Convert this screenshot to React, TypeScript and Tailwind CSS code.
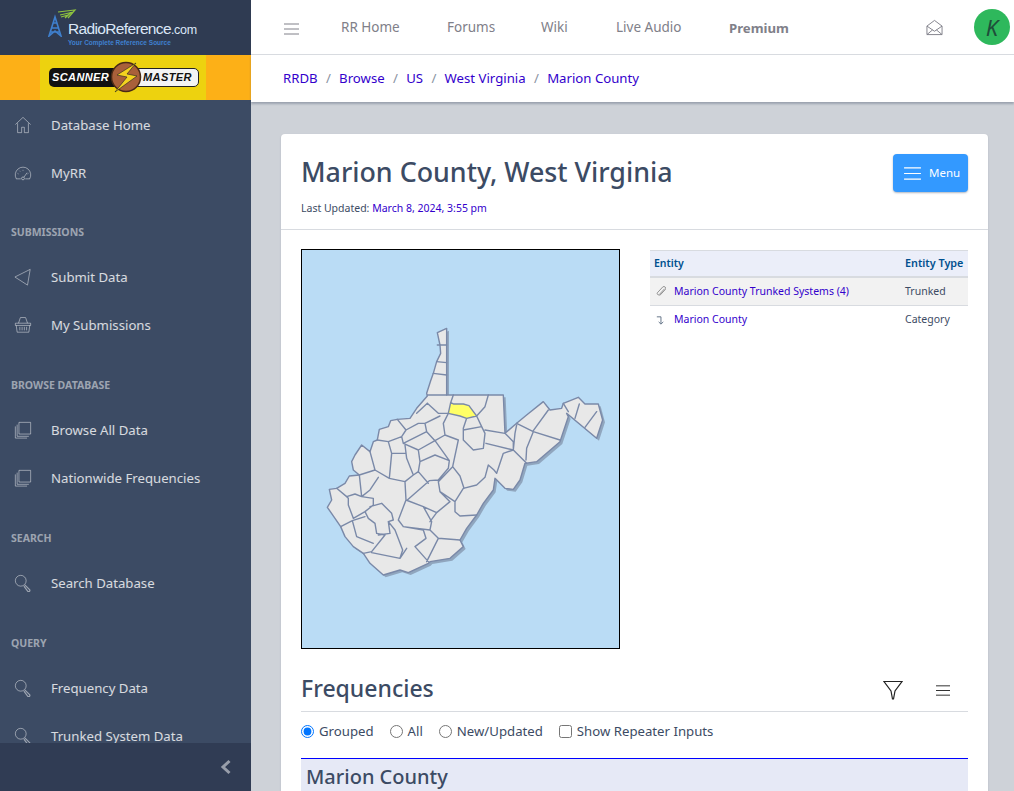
import React from "react";

const font = { fontFamily: '"Noto Sans", "Open Sans", sans-serif' };

const I = ({ children, className = "" }: { children: React.ReactNode; className?: string }) => (
  <svg viewBox="0 0 20 20" fill="none" stroke="currentColor" strokeWidth="1" className={className}>{children}</svg>
);
const Home = () => <I className="w-[18px] h-[18px]"><path d="M1.500 9.500 10 1.500l8.500 8M4 8v10.500h4.500v-6h3v6H16V8" /></I>;
const Gauge = () => <I className="w-[18px] h-[18px]"><path d="M2.500 16.500h5M12.500 16.500h5M2.600 16.500a8.600 8.600 0 1 1 14.800 0" /><circle cx="10" cy="16" r="1.600" /><path d="m11 14.700 3.500-5M4 10.500l1 .5M16 10.500l-1 .5M10 6.500v1M6 7.500l.8.8" /></I>;
const Send = () => <I className="w-[18px] h-[18px]"><path d="M1 10 18 1.500 15 19Z" /></I>;
const Basket = () => <I className="w-[18px] h-[18px]"><path d="M1.500 8h17v2.500h-17zM2.500 10.500 3.500 18h13l1-7.500M5 8l2-6M15 8l-2-6M7 1.700h6M6.500 12v4M9 12v4M11.500 12v4M14 12v4" /></I>;
const Layers = () => <I className="w-[18px] h-[18px]"><path d="M5.500 1.500h13v13h-13zM3.500 4v13h13M1.500 6v13h13" /></I>;
const Search = () => <I className="w-[18px] h-[18px]"><circle cx="7.500" cy="7.500" r="6" /><path d="m12 12 5.500 5.500a1.500 1.500 0 0 1-2 2L11 13.500" strokeWidth="1.300" /></I>;

const Item = ({ icon, label }: { icon: React.ReactNode; label: string }) => (
  <div className="h-[48px] flex items-center pl-[14px] shrink-0">
    <span className="w-[37px] text-white/50 flex shrink-0">{icon}</span>
    <span className="text-white/80 text-[13.200px] leading-[21px] whitespace-nowrap">{label}</span>
  </div>
);
const Title = ({ children, first = false }: { children: React.ReactNode; first?: boolean }) => (
  <div className={`${first ? "mt-[15px]" : "mt-4"} py-3 px-[11px] text-[10.500px] leading-[17px] font-bold uppercase text-white/50 shrink-0`}>{children}</div>
);

const Logo = () => (
  <div className="h-[55px] bg-[#2f3b52] shrink-0 flex items-start pl-[48px] pt-[9px]">
    <svg width="30" height="28" viewBox="0 0 30 28" fill="none" className="shrink-0 -mr-[10px]">
      <path d="M10 3 27 1 20 9M12 6 23 3.500 17 9M13 8 20 6" stroke="#8fc43f" strokeWidth="1.200" />
      <path d="M7 8 1 27l6-5 6 5L7 8zM4 19h6M3 23h8M5 14h4" stroke="#3f80cf" strokeWidth="1.600" />
    </svg>
    <div className="pt-[12px]">
      <div className="text-[#dbe7f7] text-[15.500px] leading-[15px] tracking-[-0.65px] whitespace-nowrap" style={{ fontFamily: '"Liberation Sans", sans-serif' }}>
        RadioReference<span className="text-[12.500px] tracking-[-0.3px]">.com</span>
      </div>
      <div className="text-[#3f80cf] text-[6.500px] leading-[9px] font-bold whitespace-nowrap" style={{ fontFamily: '"Liberation Sans", sans-serif' }}>Your Complete Reference Source</div>
    </div>
  </div>
);

const Banner = () => (
  <div className="h-[45px] bg-[#fdb017] shrink-0 pl-[40px]">
    <div className="w-[166px] h-[45px] bg-[#edd20f] flex items-center pl-[9px] pb-px">
      <div className="relative w-[150px] h-[19px] flex" style={{ fontFamily: '"Liberation Sans", sans-serif' }}>
        <div className="w-[75px] bg-[#111] rounded-l-[5px] text-white italic font-bold text-[11px] leading-[19px] pl-[3px] tracking-[0.4px]">SCANNER</div>
        <div className="w-[75px] bg-[#f4f4f4] border border-[#222] rounded-r-[5px] text-[#111] italic font-bold text-[11px] leading-[17px] pl-[18px] tracking-[0.4px]">MASTER</div>
        <svg width="34" height="36" viewBox="0 0 34 36" className="absolute left-[60px] -top-[9px]">
          <circle cx="17" cy="18" r="14.500" fill="#a9603a" stroke="#4a2a15" strokeWidth="1.500" />
          <path d="M27 4 8 16l10 2L6 33l22-16-10-2z" fill="#f4d21f" stroke="#222" strokeWidth="0.600" />
        </svg>
      </div>
    </div>
  </div>
);

const Sidebar = () => (
  <aside className="w-[251px] shrink-0 h-full bg-[#3c4b64] flex flex-col">
    <Logo />
    <Banner />
    <nav className="flex-1 min-h-0 overflow-hidden flex flex-col pt-px">
      <Item icon={<Home />} label="Database Home" />
      <Item icon={<Gauge />} label="MyRR" />
      <Title first>Submissions</Title>
      <Item icon={<Send />} label="Submit Data" />
      <Item icon={<Basket />} label="My Submissions" />
      <Title>Browse Database</Title>
      <Item icon={<Layers />} label="Browse All Data" />
      <Item icon={<Layers />} label="Nationwide Frequencies" />
      <Title>Search</Title>
      <Item icon={<Search />} label="Search Database" />
      <Title>Query</Title>
      <Item icon={<Search />} label="Frequency Data" />
      <Item icon={<Search />} label="Trunked System Data" />
    </nav>
    <div className="h-[48px] shrink-0 bg-[#303c54] flex items-center justify-end pr-[19px]">
      <svg width="12" height="16" viewBox="0 0 12 16" fill="none" stroke="#ffffff80" strokeWidth="3"><path d="M9.500 2 3 8l6.500 6" /></svg>
    </div>
  </aside>
);

const outline = "M380 -185 352 -172 360 -135 362 -110 350 -85 340 -50 332 -28 320 10 322 18 290 55 270 85 232 88 212 92 205 110 178 118 172 150 160 155 150 185 125 165 105 195 95 215 100 240 118 255 88 258 75 280 50 295 28 298 35 330 22 352 45 385 62 410 75 440 100 470 130 490 150 520 190 555 240 540 265 548 325 520 330 515 390 505 430 470 420 450 440 415 470 375 490 340 520 300 525 265 555 295 580 298 600 270 615 220 650 215 720 155 745 80 740 70 830 145 848 90 835 42 795 42 775 22 730 40 725 55 690 60 670 35 620 75 590 100 555 130 550 15 380 15Z";
const lines = [
  "M352 -135H380M350 -85 380 -82M340 -50 380 -45M322 15H380",
  "M400 15 392 38M505 15 495 50 470 78 485 110M322 40 355 70 385 70M290 70 322 40M385 70 370 100 375 135 415 150",
  "M440 85 430 115 430 150M485 110 430 120M485 110 495 130 490 175 460 180 430 150M495 120 555 130 580 155 580 180 498 160",
  "M590 100 640 125 720 150M640 125 620 175 618 210M640 122 685 60M580 180 620 220M590 105 585 130 580 180",
  "M580 180 550 190 530 250 522 240 505 225 495 262 470 285 430 295 405 335 405 365 420 378 470 375",
  "M415 150 398 230 420 258 432 295M398 230 355 275 360 305 405 335M345 152 375 135M345 152 388 212 385 235 355 270 328 272 262 330",
  "M300 215 345 195 388 212M345 152 295 180 300 215 295 245 325 280M250 160 320 125 315 100M232 88 258 120 295 100 315 100 360 78M258 120 245 140M320 125 345 152",
  "M255 165 260 205 280 255 295 245M205 155 245 140 250 160 295 180M205 155 215 190 255 190M172 150 205 155M215 190 208 265 255 275 280 255",
  "M150 185 165 240 208 265M118 255 165 240M118 255 125 320 150 300 175 262",
  "M255 275 258 330 235 390 250 410 330 420 335 395 310 350 258 330M310 350 350 368 390 335 360 305M350 368 330 395",
  "M50 295 80 320 105 312 125 320 160 325 160 345 135 365 100 385 85 345 85 325 80 320",
  "M150 350 185 340 215 370 220 390 205 395 210 430 175 435M135 365 145 385 165 400 170 430 195 435 155 485 130 490",
  "M62 410 97 392 135 380M97 392 110 440 160 460M205 395 225 420 248 480 240 505 155 488",
  "M250 410 310 420 318 445 285 470 325 515M330 420 355 445 320 515M355 445 420 450M260 475 240 505",
  "M795 112 830 65M765 85 778 42M745 65 730 40",
];

const WvMap = () => (
  <div className="w-[319px] h-[400px] shrink-0 border border-black bg-[#badcf5]">
    <svg viewBox="302 250 317 398" className="w-full h-full block">
      <g transform="translate(320 390) scale(0.3333)">
        <path d={outline} fill="#7f8ea6" opacity="0.7" transform="translate(7 7)" />
        <path d={outline} fill="#e8e8e8" stroke="#7a89a8" strokeWidth="4.200" strokeLinejoin="round" />
        <path d={lines.join("")} fill="none" stroke="#7a89a8" strokeWidth="4.200" strokeLinejoin="round" strokeLinecap="round" />
        <path d="M392 38 400 42 430 42 447 47 458 62 470 78 440 85 420 78 385 70Z" fill="#ffff66" stroke="#7a89a8" strokeWidth="4.200" strokeLinejoin="round" />
      </g>
    </svg>
  </div>
);

const Hamburger = ({ className = "" }: { className?: string }) => (
  <svg viewBox="0 0 18 16" fill="none" stroke="currentColor" strokeWidth="1.200" className={className}><path d="M0 2h18M0 8h18M0 14h18" /></svg>
);

const Header = () => (
  <header className="h-[55px] shrink-0 bg-white border-b border-[#d8dbe0] flex items-center text-[13.500px] text-[#808089]">
    <Hamburger className="w-[15px] h-[14px] ml-[33px] mt-[3px] text-[#808089]" />
    <div className="ml-[42px] w-[106px] pt-px">RR Home</div>
    <div className="w-[94px] pt-px">Forums</div>
    <div className="w-[75px] pt-px">Wiki</div>
    <div className="w-[113px] pt-px">Live Audio</div>
    <div className="font-bold text-[13.200px] pt-[3px]">Premium</div>
    <svg viewBox="0 0 18 18" width="17" height="17" fill="none" stroke="#808089" strokeWidth="1" className="ml-auto mr-[31px]">
      <path d="M1 7.500 9 1.500l8 6V16.500H1zM1 7.500l8 5.500 8-5.500M1 16.500l6-5M17 16.500l-6-5" />
    </svg>
    <div className="w-[36px] h-[36px] rounded-full bg-[#2eb85c] mr-[4px] flex items-center justify-center text-[#1f4d3a] italic text-[22px]">K</div>
  </header>
);

const Crumb = () => (
  <div className="h-[47px] shrink-0 bg-white flex items-center pl-[32px] text-[13.200px] text-[#3300cc] shadow-[0_2px_2px_rgba(60,75,100,0.35)] relative gap-[8.300px]">
    {["RRDB", "Browse", "US", "West Virginia", "Marion County"].map((c, i) => (
      <React.Fragment key={c}>
        {i > 0 && <span className="text-[#8a93a2]">/</span>}
        <span>{c}</span>
      </React.Fragment>
    ))}
  </div>
);

const Content = () => (
  <div className="bg-white rounded-[4px] shadow-[0_1px_2px_rgba(60,75,100,0.2)] text-[#3c4b64]">
    <div className="h-[96px] border-b border-[#d8dbe0] px-[20px] pt-[20px] flex justify-between">
      <div>
        <h1 className="text-[26.800px] leading-[36px] font-medium">Marion County, West Virginia</h1>
        <p className="mt-[10px] text-[10.500px] leading-[16px]">Last Updated: <span className="text-[#3300cc]">March 8, 2024, 3:55 pm</span></p>
      </div>
      <button className="w-[75px] h-[38px] bg-[#3399ff] rounded-[4px] shadow-[0_1px_2px_rgba(60,75,100,0.4)] text-white text-[11.500px] flex items-center pl-[11px] gap-[8px]">
        <Hamburger className="w-[17px] h-[15px]" />
        Menu
      </button>
    </div>
    <div className="px-[20px] pt-[19px]">
      <div className="flex">
        <WvMap />
        <div className="ml-[30px] flex-1 text-[10.500px] mt-px">
          <div className="h-[28px] bg-[#ebeef9] border-t border-b-2 border-[#d8dbe0] flex items-center pl-[4px] font-semibold text-[#00508f]">
            <span className="w-[251px]">Entity</span>
            <span className="text-[10.800px] whitespace-nowrap">Entity Type</span>
          </div>
          <div className="h-[28px] bg-[#f2f2f2] border-b border-[#d8dbe0] flex items-center pl-[5px]">
            <svg viewBox="0 0 12 12" width="11" height="11" fill="none" stroke="#8a8a8a" strokeWidth="1" className="shrink-0"><path d="M10.500 3 4.500 9.500a1.500 1.500 0 0 1-2-2l6-6.500a2 2 0 0 1 2.800 2.800L5 10.500" /></svg>
            <span className="ml-[8px] text-[#3300cc] w-[231px]">Marion County Trunked Systems (4)</span>
            <span>Trunked</span>
          </div>
          <div className="h-[28px] flex items-center pl-[5px]">
            <svg viewBox="0 0 12 12" width="11" height="11" fill="none" stroke="#5a6a80" strokeWidth="1" className="shrink-0"><path d="M2 2h4.500v7.500M4 7.500l2.500 2.500L9 7.500" /></svg>
            <span className="ml-[8px] text-[#3300cc] w-[231px]">Marion County</span>
            <span>Category</span>
          </div>
        </div>
      </div>
      <div className="mt-[22px] h-[41px] border-b border-[#d8dbe0] flex items-center pb-[2px]">
        <h2 className="text-[23px] leading-[36px] font-medium mb-[4px]">Frequencies</h2>
        <svg viewBox="0 0 20 20" width="20" height="20" fill="none" stroke="#222" strokeWidth="1.200" className="ml-auto mr-[33px]"><path d="M1 1.500h18L12 11l-1.500 8h-1L8 11z" /></svg>
        <Hamburger className="w-[14px] h-[13px] mr-[18px] text-[#222]" />
      </div>
      <div className="h-[40px] flex items-center text-[13.200px] pb-px">
        <label className="flex items-center gap-[5px] mr-[16px]"><input type="radio" name="v" defaultChecked className="m-0 w-[13px] h-[13px] accent-[#0075ff]" />Grouped</label>
        <label className="flex items-center gap-[5px] mr-[16px]"><input type="radio" name="v" className="m-0 w-[13px] h-[13px]" />All</label>
        <label className="flex items-center gap-[5px] mr-[16px]"><input type="radio" name="v" className="m-0 w-[13px] h-[13px]" />New/Updated</label>
        <label className="flex items-center gap-[5px]"><input type="checkbox" className="m-0 w-[13px] h-[13px]" />Show Repeater Inputs</label>
      </div>
      <div className="mt-[6px] border-t border-[#0000ff] bg-[#e6e9f6] h-[60px] pl-[5px] text-[20px] leading-[36px] font-medium">Marion County</div>
    </div>
  </div>
);

export default function App() {
  return (
    <div className="flex h-[791px] w-[1014px] overflow-hidden bg-[#ced2d8]" style={font}>
      <Sidebar />
      <div className="flex-1 min-w-0 flex flex-col">
        <Header />
        <Crumb />
        <main className="flex-1 min-h-0 overflow-hidden pt-[32px] pl-[30px] pr-[26px]">
          <Content />
        </main>
      </div>
    </div>
  );
}
